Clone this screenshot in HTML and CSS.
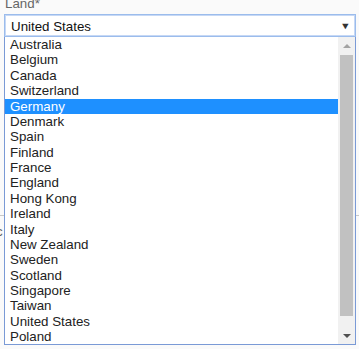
FILE: index.html
```html
<!DOCTYPE html>
<html>
<head>
    <title>Land</title>
    <meta name="viewport" content="width=device-width, initial-scale=1">
    <link rel="stylesheet" href="styles.css">
</head>
<body>
    <div class="field">
        <label class="field-label">Land*</label>
        <div class="select-box">
            <span class="select-value">United States</span>
            <span class="select-arrow">&#9660;</span>
        </div>

        <!-- open dropdown, lies over the rest of the form -->
        <div class="dropdown">
            <ul class="options">
                <li>Australia</li>
                <li>Belgium</li>
                <li>Canada</li>
                <li>Switzerland</li>
                <li class="active">Germany</li>
                <li>Denmark</li>
                <li>Spain</li>
                <li>Finland</li>
                <li>France</li>
                <li>England</li>
                <li>Hong Kong</li>
                <li>Ireland</li>
                <li>Italy</li>
                <li>New Zealand</li>
                <li>Sweden</li>
                <li>Scotland</li>
                <li>Singapore</li>
                <li>Taiwan</li>
                <li>United States</li>
                <li>Poland</li>
            </ul>
            <div class="scrollbar">
                <span class="scroll-btn up"></span>
                <div class="scroll-track"><div class="scroll-thumb"></div></div>
                <span class="scroll-btn down"></span>
            </div>
        </div>
    </div>

    <div class="under">
        <div class="under-line"></div>
        <span class="under-text">c</span>
    </div>
</body>
</html>
```

FILE: styles.css
```css
body {
    background-color: #fafafa;
    color: #222;
    font-family: "Liberation Sans", Arial, sans-serif;
    font-size: 13.33px;
    margin: 0;
    padding: 0 3px 0 4px;
    overflow: hidden;
}

.field {
    position: relative;
    z-index: 2;
}

.field-label {
    display: block;
    color: #666;
    line-height: 15px;
    margin-top: -4px;
    margin-left: 1px;
    height: 18px;
}

/* closed select, focused */
.select-box {
    display: flex;
    align-items: center;
    justify-content: space-between;
    height: 21px;
    background-color: #fff;
    border: 1px solid #9bbcec;
    box-shadow: inset 0 0 0 1px #c6d8f5;
    padding: 0 5px 0 6px;
}

.select-value {
    color: #111;
    padding-top: 1px;
}

.select-arrow {
    font-size: 9px;
    color: #333;
    transform: scaleX(1.2);
}

/* popup list */
.dropdown {
    display: flex;
    background-color: #fff;
    border: 1px solid #7a9ad6;
    border-top: none;
    height: 307px;
}

.options {
    flex: 1;
    list-style: none;
    margin: 0;
    padding: 0;
}

.options li {
    line-height: 15.38px;
    height: 15.38px;
    padding-left: 5px;
    color: #222;
    white-space: nowrap;
}

.options li.active {
    background-color: #1e90ff;
    color: #fff;
}

.scrollbar {
    width: 17px;
    display: flex;
    flex-direction: column;
    background-color: #f1f1f1;
}

.scroll-btn {
    height: 17px;
    display: flex;
    align-items: center;
    justify-content: center;
}

.scroll-btn::after {
    content: "";
    width: 0;
    height: 0;
    border-left: 4px solid transparent;
    border-right: 4px solid transparent;
}

.scroll-btn.up::after {
    border-bottom: 4px solid #a3a3a3;
}

.scroll-btn.down::after {
    border-top: 4px solid #505050;
}

.scroll-track {
    flex: 1;
    padding: 1px 2px;
}

.scroll-thumb {
    background-color: #c1c1c1;
    height: 261px;
}

/* bits of the form below, peeking out at the edges */
.under {
    position: absolute;
    left: 0;
    top: 215px;
    width: 100%;
    z-index: 1;
}

.under-line {
    border-top: 1px solid #c8c8c8;
}

.under-text {
    display: block;
    margin-left: -4px;
    margin-top: 8px;
    color: #666;
}
```
